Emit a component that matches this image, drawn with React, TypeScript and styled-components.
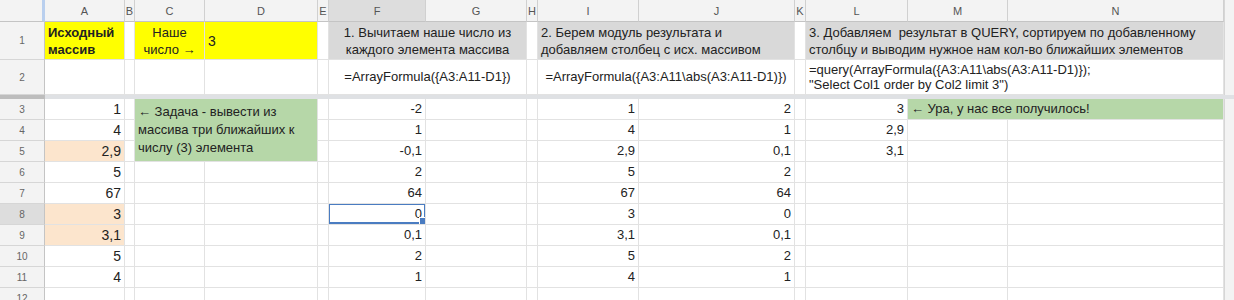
import React from "react";
import styled, { createGlobalStyle, css } from "styled-components";

const Global = createGlobalStyle`
  html, body { margin: 0; padding: 0; background: #ffffff; overflow: hidden; }
  body { font-family: "Liberation Sans", Arial, sans-serif; }
`;

const COLS = [45, 80, 10, 70, 113, 11, 97, 101, 11, 101, 156, 11, 102, 100, 216];
const LETTERS = ["A", "B", "C", "D", "E", "F", "G", "H", "I", "J", "K", "L", "M", "N"];

const Sheet = styled.div`
  display: grid;
  grid-template-columns: ${COLS.map((c) => `${c}px`).join(" ")} 1fr;
  grid-template-rows: 22px 38px 35px 4px repeat(10, 21px);
  width: 1234px;
  height: 300px;
  overflow: hidden;
  color: #000;
`;

const Corner = styled.div`
  background: #f3f3f3;
  border-bottom: 1px solid #c4c4c4;
  border-right: 3px solid #b9cfee;
  box-sizing: border-box;
`;

const ColHeader = styled.div<{ $sel?: boolean }>`
  background: ${(p) => (p.$sel ? "#dddddd" : "#f3f3f3")};
  border-right: 1px solid #d0d0d0;
  border-bottom: 1px solid #c4c4c4;
  box-sizing: border-box;
  display: flex;
  align-items: center;
  justify-content: center;
  font-size: 11px;
  color: #555;
  overflow: hidden;
`;

const RowHeader = styled.div<{ $sel?: boolean }>`
  background: ${(p) => (p.$sel ? "#dddddd" : "#f3f3f3")};
  border-right: 1px solid #c4c4c4;
  border-bottom: 1px solid #d6d6d6;
  box-sizing: border-box;
  display: flex;
  align-items: center;
  justify-content: center;
  font-size: 10px;
  color: #666;
`;

const Filler = styled.div`
  background: #f3f3f3;
  border-left: 1px solid #d6d6d6;
  box-sizing: border-box;
`;

const FreezeHead = styled.div`
  background: #bdbdbd;
`;

const FreezeBar = styled.div`
  grid-column: 2 / -1;
  background: #dfe1e4;
`;

type CellProps = {
  $bg?: string;
  $align?: "left" | "center" | "right";
  $bold?: boolean;
  $size?: number;
  $lh?: number;
  $span?: number;
  $rspan?: number;
};

const Cell = styled.div<CellProps>`
  position: relative;
  box-sizing: border-box;
  border-right: 1px solid #e2e2e2;
  border-bottom: 1px solid #e2e2e2;
  background: ${(p) => p.$bg ?? "#ffffff"};
  display: flex;
  align-items: center;
  justify-content: ${(p) =>
    p.$align === "center" ? "center" : p.$align === "left" ? "flex-start" : "flex-end"};
  text-align: ${(p) => p.$align ?? "right"};
  padding: 0 3px;
  font-size: ${(p) => p.$size ?? 13}px;
  line-height: ${(p) => p.$lh ?? 16}px;
  font-weight: ${(p) => (p.$bold ? 700 : 400)};
  color: #222;
  white-space: pre-wrap;
  overflow: hidden;
  ${(p) => p.$span && css`grid-column: span ${p.$span};`}
  ${(p) => p.$rspan && css`grid-row: span ${p.$rspan};`}
`;

const Selection = styled.div`
  position: absolute;
  inset: -1px -1px 0 -1px;
  border: 2px solid #4a7cc1;
  pointer-events: none;
`;

const Handle = styled.div`
  position: absolute;
  right: -3px;
  bottom: -3px;
  width: 6px;
  height: 6px;
  background: #4a7cc1;
  border: 1px solid #fff;
`;

const YELLOW = "#ffff00";
const GRAY = "#d9d9d9";
const GREEN = "#b6d7a8";
const PEACH = "#fce5cd";

type Spec = {
  v?: string;
  bg?: string;
  align?: "left" | "center" | "right";
  bold?: boolean;
  size?: number;
  lh?: number;
  span?: number;
  rspan?: number;
  sel?: boolean;
};

const e: Spec = {};

const top: Spec[][] = [
  [
    { v: "Исходный\nмассив", bg: YELLOW, align: "left", bold: true, size: 13, lh: 17 },
    e,
    { v: "Наше\nчисло →", bg: YELLOW, align: "center", size: 13, lh: 17 },
    { v: "3", bg: YELLOW, align: "left", size: 14 },
    e,
    { v: "1. Вычитаем наше число из\nкаждого элемента массива", bg: GRAY, align: "center", span: 2, size: 13, lh: 17 },
    e,
    { v: "2. Берем модуль результата и\nдобавляем столбец с исх. массивом", bg: GRAY, align: "left", span: 2, size: 13, lh: 17 },
    e,
    {
      v: "3. Добавляем  результат в QUERY, сортируем по добавленному\nстолбцу и выводим нужное нам кол-во ближайших элементов",
      bg: GRAY,
      align: "left",
      span: 3,
      size: 13,
      lh: 17,
    },
  ],
  [
    e,
    e,
    e,
    e,
    e,
    { v: "=ArrayFormula({A3:A11-D1})", align: "center", span: 2, size: 13 },
    e,
    { v: "=ArrayFormula({A3:A11\\abs(A3:A11-D1)})", align: "center", span: 2, size: 13 },
    e,
    {
      v: "=query(ArrayFormula({A3:A11\\abs(A3:A11-D1)});\n\"Select Col1 order by Col2 limit 3\")",
      align: "left",
      span: 3,
      size: 13,
      lh: 15,
    },
  ],
];

const A = ["1", "4", "2,9", "5", "67", "3", "3,1", "5", "4", ""];
const AHL = [false, false, true, false, false, true, true, false, false, false];
const F = ["-2", "1", "-0,1", "2", "64", "0", "0,1", "2", "1", ""];
const I = ["1", "4", "2,9", "5", "67", "3", "3,1", "5", "4", ""];
const J = ["2", "1", "0,1", "2", "64", "0", "0,1", "2", "1", ""];
const L = ["3", "2,9", "3,1", "", "", "", "", "", "", ""];

const dataRows: Spec[][] = A.map((_, i) => {
  const row: Spec[] = [];
  row.push({ v: A[i], bg: AHL[i] ? PEACH : undefined, size: 14 });
  row.push(e);
  if (i === 0) {
    row.push({
      v: "← Задача - вывести из\nмассива три ближайших к\nчислу (3) элемента",
      bg: GREEN,
      align: "left",
      span: 2,
      rspan: 3,
      size: 13,
      lh: 18,
    });
  } else if (i > 2) {
    row.push(e, e);
  }
  row.push(e);
  row.push({ v: F[i], sel: i === 5 });
  row.push(e, e);
  row.push({ v: I[i] }, { v: J[i] }, e);
  row.push({ v: L[i] });
  if (i === 0) {
    row.push({ v: "← Ура, у нас все получилось!", bg: GREEN, align: "left", span: 2 });
  } else {
    row.push(e, e);
  }
  return row;
});

function renderCell(s: Spec, key: string) {
  return (
    <Cell
      key={key}
      $bg={s.bg}
      $align={s.align}
      $bold={s.bold}
      $size={s.size}
      $lh={s.lh}
      $span={s.span}
      $rspan={s.rspan}
    >
      {s.v}
      {s.sel && (
        <Selection>
          <Handle />
        </Selection>
      )}
    </Cell>
  );
}

export default function App() {
  return (
    <>
      <Global />
      <Sheet>
        <Corner />
        {LETTERS.map((l) => (
          <ColHeader key={l} $sel={l === "F"}>
            {l}
          </ColHeader>
        ))}
        <Filler />

        {top.map((row, r) => (
          <React.Fragment key={`t${r}`}>
            <RowHeader>{r + 1}</RowHeader>
            {row.map((s, c) => renderCell(s, `t${r}-${c}`))}
            <Filler />
          </React.Fragment>
        ))}

        <FreezeHead />
        <FreezeBar />

        {dataRows.map((row, r) => (
          <React.Fragment key={`d${r}`}>
            <RowHeader $sel={r + 3 === 8}>{r + 3}</RowHeader>
            {row.map((s, c) => renderCell(s, `d${r}-${c}`))}
            <Filler />
          </React.Fragment>
        ))}
      </Sheet>
    </>
  );
}
